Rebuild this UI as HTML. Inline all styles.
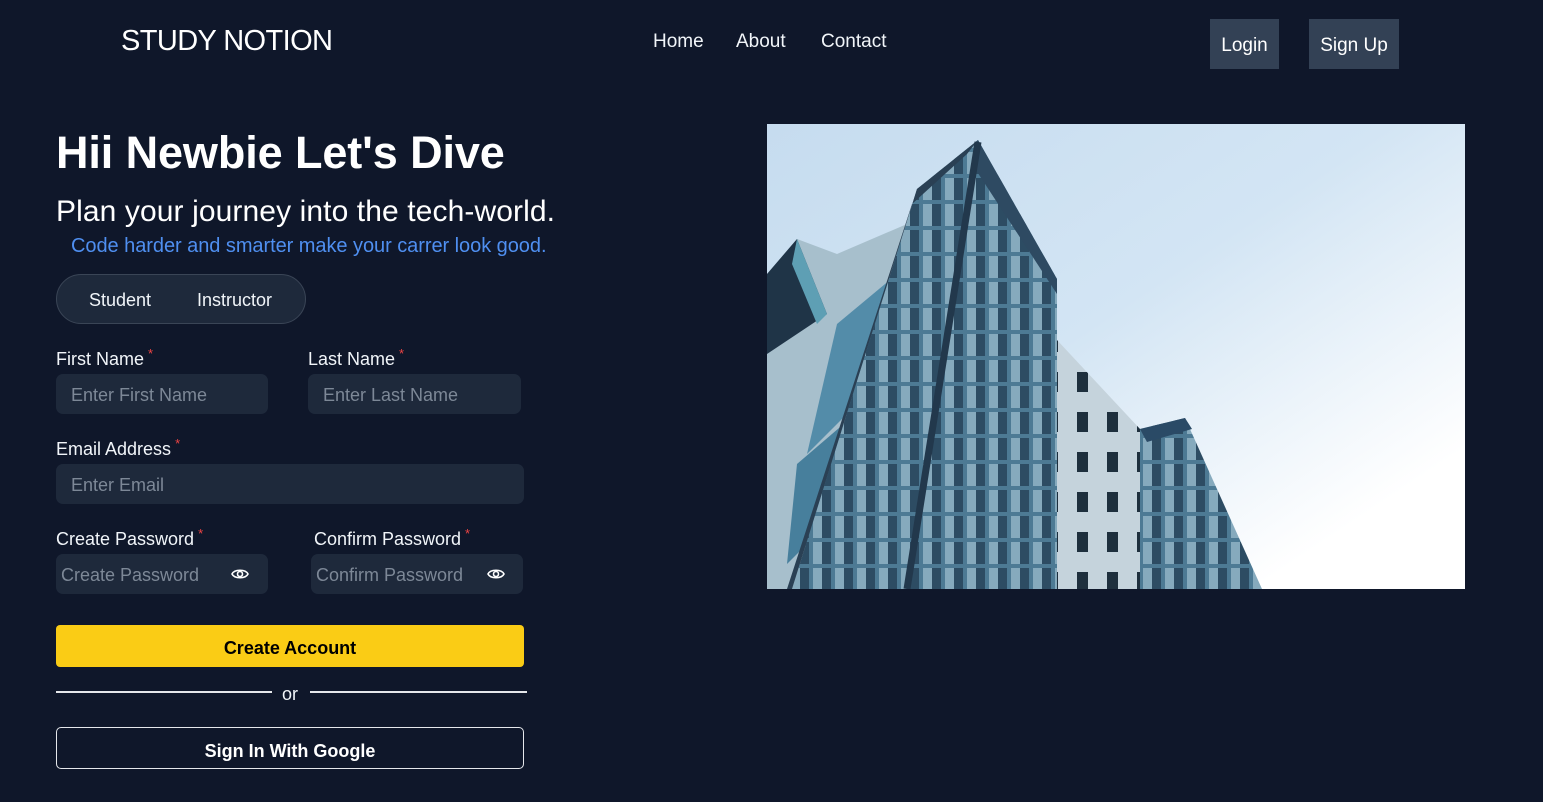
<!DOCTYPE html>
<html><head><meta charset="utf-8"><style>
*{margin:0;padding:0;box-sizing:border-box}
body{width:1543px;height:802px;background:#0f172a;font-family:"Liberation Sans",sans-serif;color:#f1f5f9;position:relative;overflow:hidden}
.a{position:absolute;white-space:nowrap}
.lbl{font-size:18px;color:#f1f5f9}
.lbl sup{color:#ef4444;font-size:13px;margin-left:4px}
.inp{position:absolute;background:#1e293b;border-radius:7px;height:40px;color:#7d8897;font-size:18px;padding-left:15px;line-height:42px}
.btn{position:absolute;background:#334155;color:#fff;font-size:19px;text-align:center;line-height:54px;height:50px}
.eye{position:absolute;top:13px}
</style></head><body>
<div class="a" style="left:121px;top:25px;font-size:29px;color:#fff;letter-spacing:-0.6px">STUDY NOTION</div>
<div class="a" style="left:653px;top:31px;font-size:19px">Home</div>
<div class="a" style="left:736px;top:31px;font-size:19px">About</div>
<div class="a" style="left:821px;top:31px;font-size:19px">Contact</div>
<div class="btn" style="left:1210px;top:19px;width:69px">Login</div>
<div class="btn" style="left:1309px;top:19px;width:90px">Sign Up</div>

<div class="a" style="left:56px;top:127px;font-size:45px;font-weight:bold;color:#fff;letter-spacing:-0.1px">Hii Newbie Let's Dive</div>
<div class="a" style="left:56px;top:195px;font-size:30px;color:#fff;letter-spacing:0.1px">Plan your journey into the tech-world.</div>
<div class="a" style="left:71px;top:235px;font-size:20px;color:#4f8ff0;letter-spacing:-0.05px">Code harder and smarter make your carrer look good.</div>

<div class="a" style="left:56px;top:274px;width:250px;height:50px;border-radius:25px;background:#1e293b;border:1px solid #3a4556"></div>
<div class="a" style="left:89px;top:290px;font-size:18px">Student</div>
<div class="a" style="left:197px;top:290px;font-size:18px">Instructor</div>

<div class="a lbl" style="left:56px;top:346px">First Name<sup>*</sup></div>
<div class="a lbl" style="left:308px;top:346px">Last Name<sup>*</sup></div>
<div class="inp" style="left:56px;top:374px;width:212px">Enter First Name</div>
<div class="inp" style="left:308px;top:374px;width:213px">Enter Last Name</div>

<div class="a lbl" style="left:56px;top:436px">Email Address<sup>*</sup></div>
<div class="inp" style="left:56px;top:464px;width:468px">Enter Email</div>

<div class="a lbl" style="left:56px;top:526px">Create Password<sup>*</sup></div>
<div class="a lbl" style="left:314px;top:526px">Confirm Password<sup>*</sup></div>
<div class="inp" style="left:56px;top:554px;width:212px;padding-left:5px">Create Password
<svg class="eye" style="left:175px" width="18" height="14" viewBox="0 0 18 14"><path d="M1 7C3.5 2 14.5 2 17 7C14.5 12 3.5 12 1 7Z" fill="none" stroke="#fff" stroke-width="1.6"/><circle cx="9" cy="7" r="2.5" fill="none" stroke="#fff" stroke-width="1.6"/></svg></div>
<div class="inp" style="left:311px;top:554px;width:212px;padding-left:5px">Confirm Password
<svg class="eye" style="left:176px" width="18" height="14" viewBox="0 0 18 14"><path d="M1 7C3.5 2 14.5 2 17 7C14.5 12 3.5 12 1 7Z" fill="none" stroke="#fff" stroke-width="1.6"/><circle cx="9" cy="7" r="2.5" fill="none" stroke="#fff" stroke-width="1.6"/></svg></div>

<div class="a" style="left:56px;top:625px;width:468px;height:42px;background:#facc15;border-radius:4px;color:#000;font-weight:bold;font-size:18px;text-align:center;line-height:46px">Create Account</div>
<div class="a" style="left:56px;top:691px;width:216px;height:2px;background:#e5e7eb"></div>
<div class="a" style="left:310px;top:691px;width:217px;height:2px;background:#e5e7eb"></div>
<div class="a" style="left:282px;top:684px;font-size:18px">or</div>
<div class="a" style="left:56px;top:727px;width:468px;height:42px;border:1px solid #e5e7eb;border-radius:5px;font-weight:bold;font-size:18px;text-align:center;line-height:46px;color:#fff">Sign In With Google</div>

<svg class="a" style="left:767px;top:124px" width="698" height="465" viewBox="0 0 698 465">
<defs>
<linearGradient id="sky" x1="0" y1="0" x2="1" y2="1"><stop offset="0" stop-color="#c6dcef"/><stop offset="0.45" stop-color="#d3e5f4"/><stop offset="0.85" stop-color="#ffffff"/></linearGradient>
<pattern id="win" width="22" height="26" patternUnits="userSpaceOnUse"><rect width="22" height="26" fill="#4d7a94"/><rect x="2" y="2" width="18" height="22" fill="#2d4c63"/><rect x="2" y="2" width="9" height="22" fill="#86aabd"/></pattern>
<pattern id="win2" width="30" height="40" patternUnits="userSpaceOnUse"><rect width="30" height="40" fill="#c5d3dc"/><rect x="10" y="8" width="11" height="20" fill="#1e2f3d"/></pattern>
</defs>
<rect width="698" height="465" fill="url(#sky)"/>
<polygon points="0,150 30,115 70,130 140,100 140,465 0,465" fill="#a7bfcc"/>
<polygon points="0,150 30,115 60,190 0,230" fill="#1f3447"/>
<polygon points="30,115 60,190 50,200 25,140" fill="#5e9fb4"/>
<polygon points="70,200 130,150 110,260 40,330" fill="#3f7fa0" opacity=".8"/>
<polygon points="30,340 100,280 90,370 20,440" fill="#2f6f90" opacity=".8"/>
<polygon points="290,216 373,305 373,465 290,465" fill="url(#win2)"/>
<polygon points="150,65 211,16 290,155 290,465 25,465" fill="url(#win)"/>
<polygon points="150,65 211,16 200,30 145,80 20,465 25,465" fill="#2a4054"/>
<polygon points="211,16 290,155 290,170 205,40" fill="#2e4a62"/>
<line x1="211" y1="18" x2="140" y2="465" stroke="#22384c" stroke-width="7"/>
<polygon points="373,305 418,294 495,465 373,465" fill="url(#win)"/>
<polygon points="373,305 418,294 425,305 380,318" fill="#2a4a66"/>
</svg>
</body></html>
